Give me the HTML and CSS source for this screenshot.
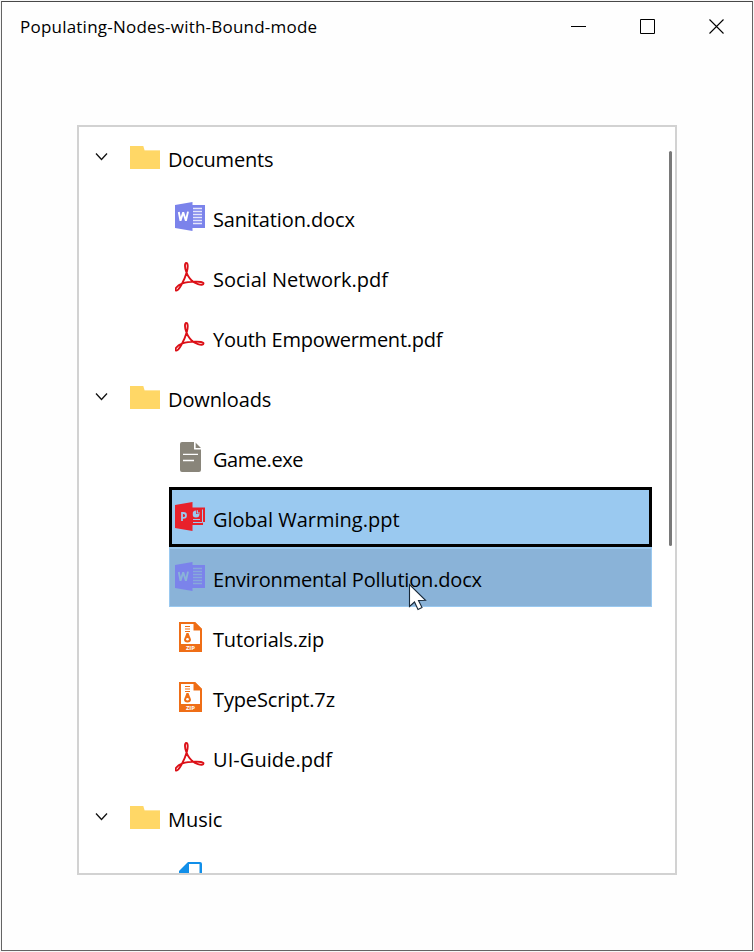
FILE: index.html
```
<!DOCTYPE html>
<html lang="en">
<head>
<meta charset="utf-8">
<title>Populating-Nodes-with-Bound-mode</title>
<link rel="stylesheet" href="styles.css">
</head>
<body>
<svg class="defs" aria-hidden="true">
  <symbol id="chevron" viewBox="0 0 14 10"><path d="M1 1.500 6.500 7.500 12 1.500" fill="none" stroke="#111" stroke-width="1.300"/></symbol>
  <symbol id="folder" viewBox="0 0 30 30"><path d="M0 4h13.300l1.200 4H30v19H0z" fill="#ffd766"/><path d="M14.500 8.500H30" stroke="#ffe59d"/></symbol>
  <symbol id="word" viewBox="0 0 30 30"><path d="M17 3h13v23H17z" fill="#7b83eb"/><path d="M18 6.500h9M18 9.500h9M18 12.500h9M18 15.500h9M18 18.500h9M18 21.500h9" stroke="var(--ink)" stroke-width="1.300" opacity=".8"/><path d="M0 3 17.500 0v29L0 26z" fill="#7b83eb"/><path d="M3.800 10l1.700 8.700 2.700-8.500 2.700 8.500L13 9.600" fill="none" stroke="var(--ink)" stroke-width="1.900" stroke-linejoin="bevel"/></symbol>
  <symbol id="pdf" viewBox="0 0 30 30"><path d="M11.300 10C9.700 6 9.400 1 11.300 1s1.700 5 .5 9C9.500 18 4 28.500 1.500 28.500S1 23.500 7.500 21.400C13 19.600 28.500 18.500 28.500 21.500S18.500 22 14.500 16C13 14 12 12 11.300 10" fill="none" stroke="#dc1017" stroke-width="1.900" stroke-linejoin="round"/></symbol>
  <symbol id="file" viewBox="0 0 30 30"><path d="M7 0h8v6.500q0 2 2 2h9V28q0 2-2 2H7q-2 0-2-2V2q0-2 2-2zM15 0h4v7h7v2H15zM20.500.500 26 6h-5.500z" fill="#89857a"/><path d="M19.700 0v6.800H26" fill="none" stroke="#fff" stroke-width="1.200"/><path d="M8 12.300h15M8 18.500h11" stroke="#fff" stroke-width="1.300"/></symbol>
  <symbol id="ppt" viewBox="0 0 30 30"><path d="M17 5.500h13V20h-2v3H17z" fill="#e8212b"/><path d="M18 20.500h9.500V7.500" fill="none" stroke="#9ac9f0"/><path d="M21 8.500a3.500 3.500 0 1 0 3.500 3.500H21z" fill="#9ac9f0"/><path d="M22.300 8.300v2.700H25" fill="none" stroke="#9ac9f0" stroke-width="1.200"/><path d="M18 17.500h7" stroke="#9ac9f0"/><path d="M0 3 17.500 0v29L0 26z" fill="#e8212b"/><path d="M7 19v-8h1.500q2.500 0 2.500 2.400t-2.500 2.400H7" fill="none" stroke="#9ac9f0" stroke-width="1.800"/></symbol>
  <symbol id="zip" viewBox="0 0 30 30"><path d="M4 0h16l7 7v23H4z" fill="#ef6e17"/><path d="M6 2h12.500v6.500H25V22H6z" fill="#fff"/><path d="M20 0v7h7z" fill="#ef6e17"/><path d="M10 4.500h5M10 7h5M10 9.500h5" stroke="#ef6e17" stroke-width="1.200"/><path d="M11.500 11h2l2.500 6.500q0 3-3.500 3T9 17.500z" fill="#ef6e17"/><circle cx="12.500" cy="17.300" r="1.300" fill="#fff"/><text x="15.500" y="28" text-anchor="middle" font-family="Open Sans" font-weight="700" font-size="6" fill="#fff">ZIP</text></symbol>
  <symbol id="audio" viewBox="0 0 30 30"><path d="M13 0h12q2 0 2 2v28H4V9z" fill="#118fe9"/><path d="M14 2h10.500v26H6V11h8z" fill="#fff"/><path d="M4 10 13 1v9z" fill="#118fe9"/></symbol>
</svg>
<div class="window">
  <header class="titlebar">
    <h1 class="title">Populating-Nodes-with-Bound-mode</h1>
    <svg class="controls" viewBox="0 0 154 16"><path d="M0 7.500h15M69.500.500h14v14h-14z" fill="none" stroke="#000"/><path d="M138.500 .500l14 14M152.500 .500l-14 14" stroke="#000" stroke-width="1.100"/></svg>
  </header>
  <main class="tree">
    <div class="node"><svg class="chevron"><use href="#chevron"/></svg><svg class="icon"><use href="#folder"/></svg><span class="label t-documents">Documents</span></div>
    <div class="node leaf"><svg class="icon"><use href="#word"/></svg><span class="label t-sanitation">Sanitation.docx</span></div>
    <div class="node leaf"><svg class="icon"><use href="#pdf"/></svg><span class="label">Social Network.pdf</span></div>
    <div class="node leaf"><svg class="icon"><use href="#pdf"/></svg><span class="label t-youth">Youth Empowerment.pdf</span></div>
    <div class="node"><svg class="chevron"><use href="#chevron"/></svg><svg class="icon"><use href="#folder"/></svg><span class="label t-downloads">Downloads</span></div>
    <div class="node leaf"><svg class="icon"><use href="#file"/></svg><span class="label t-game">Game.exe</span></div>
    <div class="node leaf current"><svg class="icon"><use href="#ppt"/></svg><span class="label">Global Warming.ppt</span></div>
    <div class="node leaf hovered"><svg class="icon"><use href="#word"/></svg><span class="label t-env">Environmental Pollution.docx</span></div>
    <div class="node leaf"><svg class="icon"><use href="#zip"/></svg><span class="label t-tutorials">Tutorials.zip</span></div>
    <div class="node leaf"><svg class="icon"><use href="#zip"/></svg><span class="label t-typescript">TypeScript.7z</span></div>
    <div class="node leaf"><svg class="icon"><use href="#pdf"/></svg><span class="label t-guide">UI-Guide.pdf</span></div>
    <div class="node"><svg class="chevron"><use href="#chevron"/></svg><svg class="icon"><use href="#folder"/></svg><span class="label">Music</span></div>
    <div class="node leaf"><svg class="icon"><use href="#audio"/></svg></div>
    <div class="scrollbar"></div>
  </main>
  <svg class="cursor" viewBox="0 0 20 29"><path d="M1.500 1.500v22l5-4.500 3.500 7.500 4-2-3.500-7 7-.200z" fill="#fff" stroke="#182838" stroke-width="1.100"/></svg>
</div>
</body>
</html>
```
FILE: styles.css
```
* { box-sizing: border-box; }
body { margin: 0; padding: 1px; background: #f7f7f7; overflow: hidden; font-family: "Open Sans", sans-serif; color: #000; }
.defs { position: absolute; width: 0; height: 0; }
.window { position: relative; width: 752px; height: 950px; border: 1px solid #646464; border-top-color: #484848; background: #fefefe; }
.titlebar { display: flex; justify-content: space-between; align-items: flex-start; height: 123px; padding: 17px 27px 0 18px; }
.title { margin: -4px 0 0; font-size: 17px; line-height: 24px; font-weight: 400; letter-spacing: .22px; white-space: nowrap; }
.controls { width: 154px; height: 16px; }
.tree { position: relative; width: 600px; height: 750px; margin-left: 75px; border: 2px solid #d2d2d2; background: #fff; overflow: hidden; }
.node { --ink: #fff; display: flex; align-items: center; height: 60px; padding-left: 16px; }
.chevron { width: 14px; height: 10px; margin-right: 21px; }
.node .icon { width: 30px; height: 30px; flex: none; }
.leaf { width: 483px; margin-left: 90px; padding-left: 6px; }
.label { margin: 5px 0 0 8px; font-size: 20px; line-height: 28px; white-space: nowrap; }
.t-documents { letter-spacing: -.2px; }
.t-sanitation { letter-spacing: -.13px; }
.t-youth { letter-spacing: -.25px; }
.t-downloads { letter-spacing: -.12px; }
.t-game { letter-spacing: -.45px; }
.t-env { letter-spacing: -.18px; }
.t-tutorials { letter-spacing: -.17px; }
.t-typescript { letter-spacing: -.14px; }
.t-guide { letter-spacing: .06px; }
.current { background: #9ac9f0; border: 3px solid #000; padding-left: 3px; }
.hovered { --ink: #8ab3d8; background: #8ab3d8; border: 1px solid #9ac9f0; border-top-width: 2px; padding-left: 5px; }
.hovered .icon { margin-top: -1px; }
.scrollbar { position: absolute; right: 3px; top: 24px; width: 3px; height: 395px; border-radius: 2px; background: #797979; }
.cursor { position: absolute; left: 406px; top: 581px; width: 20px; height: 29px; }
```
